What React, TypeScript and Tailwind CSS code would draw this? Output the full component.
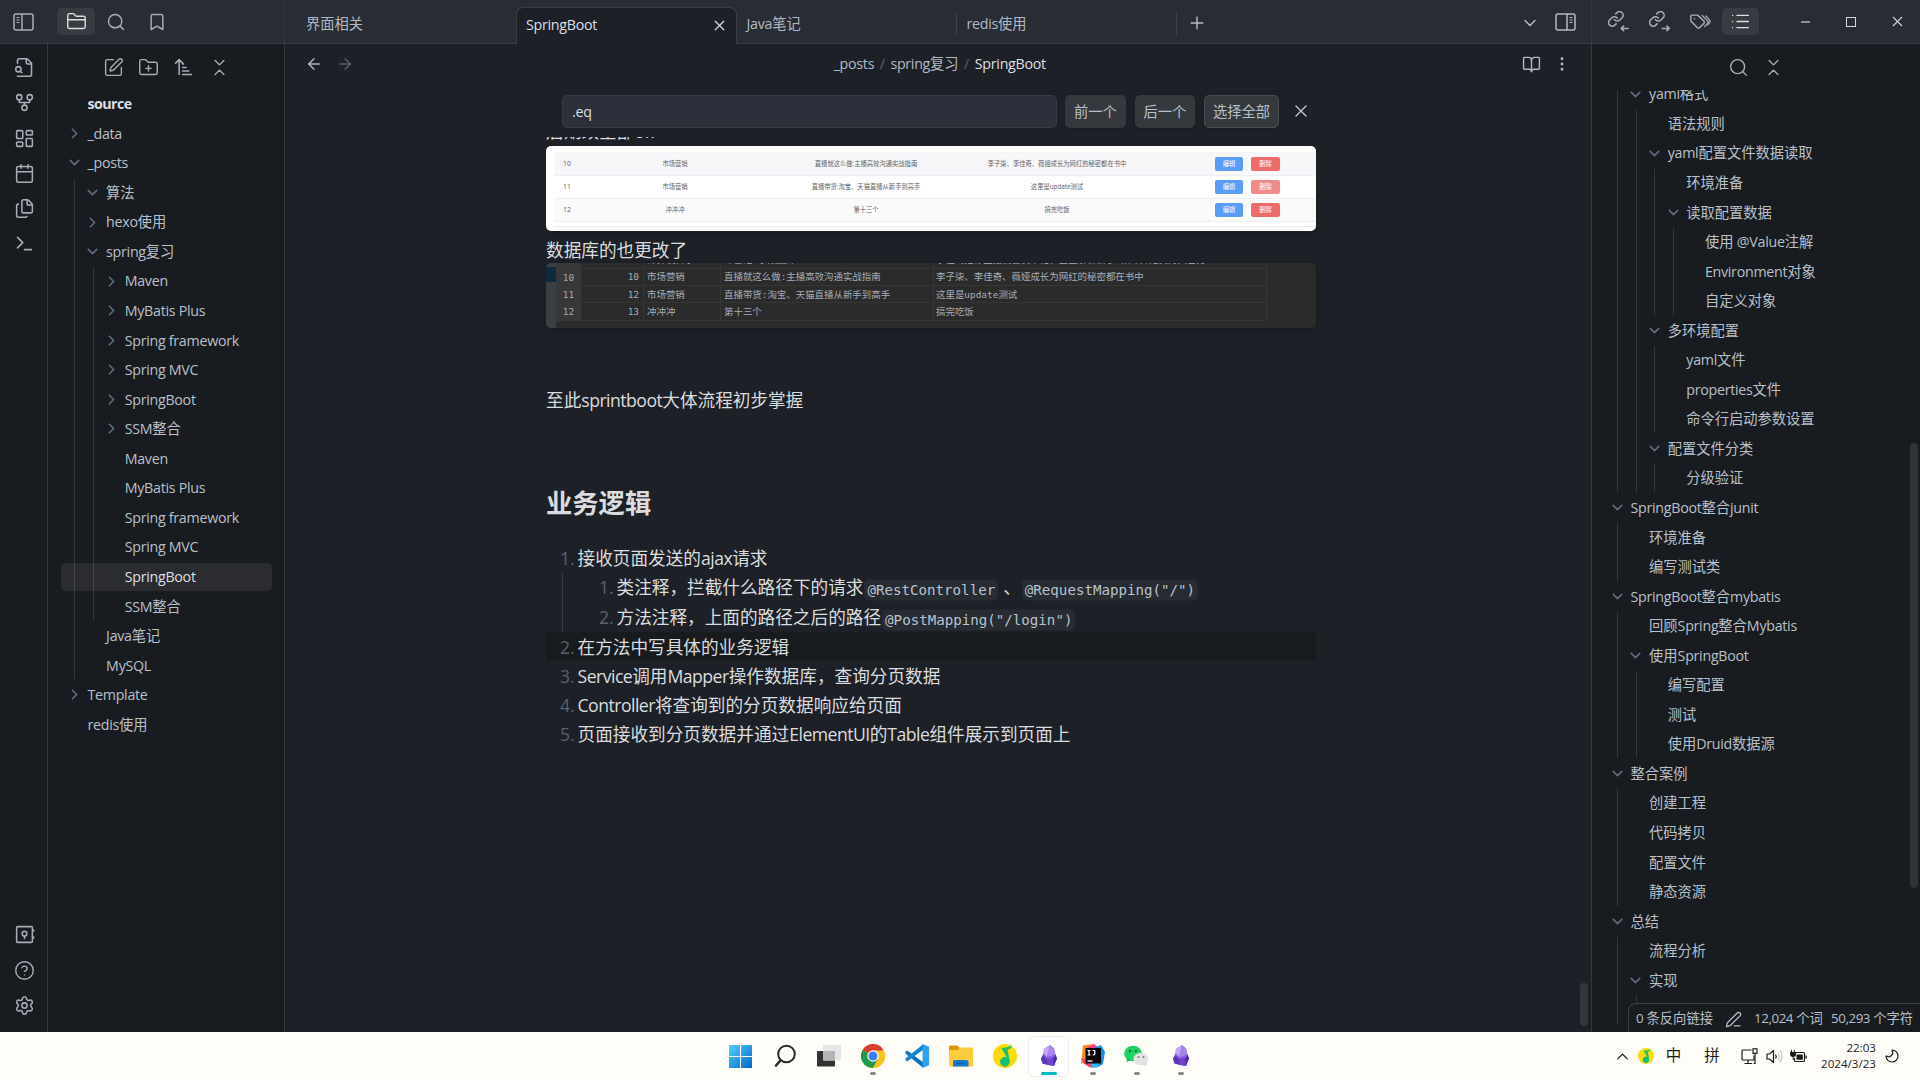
import type { ReactNode } from "react";
import {
  ArrowLeft, ArrowRight, BookOpen, Bookmark, Calendar, ChevronDown, ChevronRight, ChevronUp, ChevronsDownUp,
  CircleHelp, Files, FolderClosed, FolderPlus, GitFork, LayoutDashboard, List, EllipsisVertical, Moon, PenLine, Plus,
  Search, Settings, SquarePen, Terminal, X,
} from "lucide-react";

type TreeNode = { label?: string; children?: TreeNode[]; folded?: boolean; active?: boolean };

const FILES: TreeNode[] = [
  { label: "_data", folded: true },
  {
    label: "_posts",
    children: [
      { label: "算法", children: [] },
      { label: "hexo使用", folded: true },
      {
        label: "spring复习",
        children: [
          { label: "Maven", folded: true },
          { label: "MyBatis Plus", folded: true },
          { label: "Spring framework", folded: true },
          { label: "Spring MVC", folded: true },
          { label: "SpringBoot", folded: true },
          { label: "SSM整合", folded: true },
          { label: "Maven" },
          { label: "MyBatis Plus" },
          { label: "Spring framework" },
          { label: "Spring MVC" },
          { label: "SpringBoot", active: true },
          { label: "SSM整合" },
        ],
      },
      { label: "Java笔记" },
      { label: "MySQL" },
    ],
  },
  { label: "Template", folded: true },
  { label: "redis使用" },
];

const OUTLINE: TreeNode[] = [
  {
    children: [
      {
        label: "yaml格式",
        children: [
          { label: "语法规则" },
          {
            label: "yaml配置文件数据读取",
            children: [
              { label: "环境准备" },
              {
                label: "读取配置数据",
                children: [{ label: "使用 @Value注解" }, { label: "Environment对象" }, { label: "自定义对象" }],
              },
            ],
          },
          {
            label: "多环境配置",
            children: [{ label: "yaml文件" }, { label: "properties文件" }, { label: "命令行启动参数设置" }],
          },
          { label: "配置文件分类", children: [{ label: "分级验证" }] },
        ],
      },
    ],
  },
  { label: "SpringBoot整合junit", children: [{ label: "环境准备" }, { label: "编写测试类" }] },
  {
    label: "SpringBoot整合mybatis",
    children: [
      { label: "回顾Spring整合Mybatis" },
      { label: "使用SpringBoot", children: [{ label: "编写配置" }, { label: "测试" }, { label: "使用Druid数据源" }] },
    ],
  },
  {
    label: "整合案例",
    children: [{ label: "创建工程" }, { label: "代码拷贝" }, { label: "配置文件" }, { label: "静态资源" }],
  },
  { label: "总结", children: [{ label: "流程分析" }, { label: "实现", children: [{ label: "\u00a0" }] }] },
];

/** Mixed-script text: Latin runs are set slightly tighter than the CJK around them. */
function Mixed({ text, tight = false }: { text: string; tight?: boolean }) {
  return (
    <span className="whitespace-pre">
      {text.split(/([\x20-\x7e]+)/).map((run, i) =>
        i % 2 ? (
          <span key={i} className={tight ? "tracking-[-0.03em]" : "tracking-[-0.02em]"}>
            {run}
          </span>
        ) : (
          run
        ),
      )}
    </span>
  );
}

function Tree({ nodes, depth = 0 }: { nodes: TreeNode[]; depth?: number }) {
  return (
    <>
      {nodes.map((n, i) => (
        <div key={i}>
          {n.label && (
            <div className="relative mb-[1.56px] flex h-7 items-center">
              {n.active && (
                <div
                  className="absolute top-0 h-7 w-[211px] rounded-[5px] bg-[#ffffff14]"
                  style={{ left: -18.6 * depth }}
                />
              )}
              <span className="flex w-[26.5px] shrink-0 justify-center text-[#5b6b80]">
                {n.folded ? (
                  <ChevronRight size={17} strokeWidth={2.4} />
                ) : n.children ? (
                  <ChevronDown size={17} strokeWidth={2.4} />
                ) : null}
              </span>
              <span className={n.active ? "relative text-[#dcdfe4]" : ""}>
                <Mixed text={n.label} />
              </span>
            </div>
          )}
          {n.children && n.children.length > 0 && (
            <div className="ml-[13px] border-l border-[#34383c] pl-[4.6px]">
              <Tree nodes={n.children} depth={depth + 1} />
            </div>
          )}
        </div>
      ))}
    </>
  );
}

function Svg({ size = 21, children, w = 1.75 }: { size?: number; children: ReactNode; w?: number }) {
  return (
    <svg
      width={size} height={size} viewBox="0 0 24 24" fill="none" stroke="currentColor"
      strokeWidth={w} strokeLinecap="round" strokeLinejoin="round"
    >
      {children}
    </svg>
  );
}

function SidebarToggle({ right = false }: { right?: boolean }) {
  return (
    <svg
      width="21" height="18" viewBox="0 0 21 18" fill="none" stroke="currentColor" strokeWidth="1.5"
      className={right ? "-scale-x-100" : ""}
    >
      <rect x="1" y="1" width="19" height="16" rx="2" />
      <path d="M9 1v16" />
      <path d="M3.5 4.5h3M3.5 7h3M3.5 9.5h3" strokeWidth="1.2" />
    </svg>
  );
}

const ArrowSort = () => (
  <Svg>
    <path d="M7 20V3M3 7l4-4 4 4M11 12h4M11 16h7M11 20h10M11 8h1" />
  </Svg>
);

const QuickSwitch = () => (
  <Svg>
    <path d="M4 22h14a2 2 0 0 0 2-2V7l-5-5H6a2 2 0 0 0-2 2v3" />
    <path d="M14 2v4a2 2 0 0 0 2 2h4" />
    <circle cx="5" cy="14" r="3" />
    <path d="m9 18-1.8-1.8" />
  </Svg>
);

const Vault = () => (
  <Svg>
    <rect x="3" y="3" width="18" height="18" rx="1" />
    <circle cx="12" cy="11" r="2.7" />
    <path d="M12 14v2.5M22.5 7v1M22.5 15v1" />
  </Svg>
);

function LinkIcon({ out = false }: { out?: boolean }) {
  return (
    <Svg size={22} w={1.7}>
      <g transform="translate(-1 -1) scale(.8)" strokeWidth="2.1">
        <path d="M10 13a5 5 0 0 0 7.54.54l3-3a5 5 0 0 0-7.07-7.07l-1.72 1.71" />
        <path d="M14 11a5 5 0 0 0-7.54-.54l-3 3a5 5 0 0 0 7.07 7.07l1.71-1.71" />
      </g>
      {out ? <path d="M14.5 19H22M19.5 16.5 22 19l-2.5 2.5" /> : <path d="M22 19h-7.5M17 16.5 14.5 19l2.5 2.5" />}
    </Svg>
  );
}

const TagsIcon = () => (
  <Svg size={22} w={1.6}>
    <path d="M2 5.5v5.5l7.3 7.3a1.5 1.5 0 0 0 2.1 0l5-5a1.5 1.5 0 0 0 0-2.1L9.5 4.5H3a1 1 0 0 0-1 1z" />
    <path d="m14.5 5 6 6.2a1.5 1.5 0 0 1 0 2.1L17 17M18.5 5.5l4 4.7a2 2 0 0 1 0 2.5l-2 2.3" opacity=".9" />
    <path d="M6 8.5h.01" />
  </Svg>
);

function Cell({ w, children, cls = "" }: { w: number; children: ReactNode; cls?: string }) {
  return (
    <span className={"flex shrink-0 items-center justify-center " + cls} style={{ width: w }}>
      {children}
    </span>
  );
}

/* ---------- embedded pictures in the note ---------- */

const WEB_ROWS = [
  { id: "10", brand: "市场营销", name: "直播就这么做:主播高效沟通实战指南", desc: "李子柒、李佳奇、薇娅成长为网红的秘密都在书中", bg: "bg-[#f7f7f9]", del: "bg-[#ec6c6c]" },
  { id: "11", brand: "市场营销", name: "直播带货:淘宝、天猫直播从新手到高手", desc: "这里是update测试", bg: "bg-white", del: "bg-[#f08b8b]" },
  { id: "12", brand: "冲冲冲", name: "第十三个", desc: "搞完吃饭", bg: "bg-[#fafafa]", del: "bg-[#ec6c6c]" },
];

function WebTable() {
  return (
    <div className="flex h-[85px] flex-col overflow-hidden rounded-[5px] bg-white pl-2 text-[6.3px] text-[#606266] shadow-md">
      <div className="h-[7px] shrink-0 border-b border-[#f3f4f7]" />
      {WEB_ROWS.map((r) => (
        <div key={r.id} className={"flex h-[23px] shrink-0 items-center border-b border-[#ebeef5] " + r.bg}>
          <span className="w-[72px] pl-[9px] text-[7px]">{r.id}</span>
          <span className="w-[98px] text-center">{r.brand}</span>
          <span className="w-[284px] text-center">{r.name}</span>
          <span className="flex w-[98px] shrink-0 justify-center whitespace-nowrap">{r.desc}</span>
          <span className="ml-[109px] flex gap-[8px] text-white">
            <span className="flex h-[14px] w-[28px] items-center justify-center rounded-[2px] bg-[#5a9cf8]">编辑</span>
            <span className={"flex h-[14px] w-[29px] items-center justify-center rounded-[2px] " + r.del}>删除</span>
          </span>
        </div>
      ))}
      <div className="mt-1 h-px bg-[#ececee]" />
    </div>
  );
}

const DB_ROWS = [
  { n: "9", id: "9", brand: "计算机科学", name: "零基础   学数据库", desc: "李佳琦推荐直播销售员书籍，全面解析新手 从零开始到月入百万" },
  { n: "10", id: "10", brand: "市场营销", name: "直播就这么做:主播高效沟通实战指南", desc: "李子柒、李佳奇、薇娅成长为网红的秘密都在书中" },
  { n: "11", id: "12", brand: "市场营销", name: "直播带货:淘宝、天猫直播从新手到高手", desc: "这里是update测试" },
  { n: "12", id: "13", brand: "冲冲冲", name: "第十三个", desc: "搞完吃饭" },
];

function DbTable() {
  return (
    <div className="flex h-[65px] overflow-hidden rounded-[5px] bg-[#2b2b2b] font-['DejaVu_Sans_Mono','Noto_Sans_CJK_SC',monospace] text-[9.45px] leading-none text-[#a3aebb] shadow-md">
      <div className="w-[10px] shrink-0 bg-[#3c3f41] pt-1">
        <div className="h-[15px] bg-[#0d293e]" />
      </div>
      <div className="-mt-[11.5px]">
        {DB_ROWS.map((r) => (
          <div key={r.n} className="flex h-[17.3px] items-center whitespace-nowrap">
            <span className="flex h-full w-[25px] items-center justify-center bg-[#36383a] text-[#a4a8ab]">{r.n}</span>
            <span className="flex h-full w-[63px] items-center justify-end border-r border-b border-[#363636] pr-[4px]">{r.id}</span>
            <span className="flex h-full w-[77px] items-center border-r border-b border-[#363636] pl-[3px]">{r.brand}</span>
            <span className="flex h-full w-[213px] items-center border-r border-b border-[#363636] pl-[3px]">{r.name}</span>
            <span className="flex h-full w-[333px] items-center border-r border-b border-[#363636] pl-[2px]">{r.desc}</span>
          </div>
        ))}
      </div>
    </div>
  );
}

/* ---------- note body ---------- */

function Code({ children }: { children: string }) {
  return (
    <code className="ml-px inline-flex h-[21px] translate-y-[2.5px] items-center rounded-[5px] bg-[#272b32] px-[3px] font-['DejaVu_Sans_Mono',monospace] text-[14.15px] text-[#b9c2cd]">
      {children}
    </code>
  );
}

function Item({
  n, text, children, active = false, tall = false,
}: { n: number; text: string; children?: ReactNode; active?: boolean; tall?: boolean }) {
  return (
    <div
      className={
        "flex items-center whitespace-nowrap " + (active ? "bg-[#181b1e] " : "") + (tall ? "h-[29.8px]" : "h-[29.2px]")
      }
    >
      <span className="w-[31.5px] pl-[14px] text-[#566270]">{n}.</span>
      <Mixed text={text} tight />
      {children}
    </div>
  );
}

function Note() {
  return (
    <div className="flex h-[895px] flex-col overflow-hidden pl-[261px] text-[17.65px] text-[#dadcdf]">
      <div className="w-[770px]">
        <div className="-mt-[20px] h-[29px] leading-[29px]">后期改全部ok</div>
        <WebTable />
        <div className="h-[32px] pt-[5px] leading-[29px]">数据库的也更改了</div>
        <DbTable />
        <div className="mt-[58px] h-[29px] leading-[29px]"><Mixed text="至此sprintboot大体流程初步掌握" tight /></div>
        <div className="mt-[70px] h-[36px] text-[26.3px] leading-[36px] font-bold">业务逻辑</div>
        <div className="mt-[22.5px]">
          <Item n={1} text="接收页面发送的ajax请求" />
          <div className="ml-[16px] border-l border-[#363a3e] pl-[22px]">
            <Item n={1} tall text="类注释，拦截什么路径下的请求">
              <Code>@RestController</Code>
              <span className="ml-[5px]">、</span>
              <Code>@RequestMapping("/")</Code>
            </Item>
            <Item n={2} tall text="方法注释，上面的路径之后的路径">
              <Code>@PostMapping("/login")</Code>
            </Item>
          </div>
          <Item n={2} active text="在方法中写具体的业务逻辑" />
          <Item n={3} text="Service调用Mapper操作数据库，查询分页数据" />
          <Item n={4} text="Controller将查询到的分页数据响应给页面" />
          <Item n={5} text="页面接收到分页数据并通过ElementUI的Table组件展示到页面上" />
        </div>
      </div>
    </div>
  );
}

/* ---------- taskbar artwork ---------- */

const WinLogo = () => (
  <svg width="23" height="23" viewBox="0 0 23 23">
    <defs>
      <linearGradient id="win" x1="0" y1="0" x2="1" y2="1">
        <stop offset="0" stopColor="#55d0fb" /><stop offset="1" stopColor="#0067c9" />
      </linearGradient>
    </defs>
    <path fill="url(#win)" d="M0 0h11v11H0zM12 0h11v11H12zM0 12h11v11H0zM12 12h11v11H12z" />
  </svg>
);

const TaskSearch = () => (
  <svg width="24" height="24" viewBox="0 0 24 24" fill="none" stroke="#2a2a2a" strokeLinecap="round">
    <circle cx="13.5" cy="10" r="8.3" strokeWidth="2" />
    <path d="m7.5 16.5-4.5 5" strokeWidth="2.6" />
  </svg>
);

const TaskView = () => (
  <svg width="24" height="24" viewBox="0 0 24 24">
    <rect x="0" y="7" width="18" height="15.5" rx="1" fill="#333" />
    <rect x="6" y="1" width="18" height="15.5" rx="1" fill="#e6e6e6" />
    <rect x="6" y="7" width="12" height="9.5" fill="#b5b5b5" />
  </svg>
);

const Chrome = () => (
  <svg width="24" height="24" viewBox="0 0 48 48">
    <circle cx="24" cy="24" r="24" fill="#fbbc1e" />
    <path d="M24 24 3.2 12A24 24 0 0 1 44.8 12z" fill="#dc3a2e" />
    <path d="M24 24 3.2 12A24 24 0 0 0 24 48l10.4-18z" fill="#1f9a4b" />
    <path d="M24 13h21.3A24 24 0 0 1 24 48l10-18z" fill="#fbc116" />
    <circle cx="24" cy="24" r="11.5" fill="#fff" />
    <circle cx="24" cy="24" r="9" fill="#3a7df0" />
  </svg>
);

const VsCode = () => (
  <svg width="24" height="24" viewBox="0 0 24 24">
    <path d="M.4 8 2 6.5 18.5 18.5V24L.4 9.5z" fill="#0b72ba" />
    <path d="M.4 16 2 17.5 18.5 5.5V0L.4 14.5z" fill="#0e86d4" />
    <path d="M17.5 0 24 2.8v18.4L17.5 24z" fill="#2ba2f2" />
  </svg>
);

const Explorer = () => (
  <svg width="24" height="24" viewBox="0 0 24 24">
    <path d="M0 3a1.5 1.5 0 0 1 1.5-1.5h7L11 4v4H0z" fill="#d99a0a" />
    <path d="M0 6h9l2-2.5h12a1 1 0 0 1 1 1V21a1.5 1.5 0 0 1-1.5 1.5h-21A1.5 1.5 0 0 1 0 21z" fill="#fdcb3e" />
    <path d="M4 22.5V18a2 2 0 0 1 2-2h11.5a2 2 0 0 1 2 2v4.5z" fill="#1677cc" />
    <path d="M7.5 19.5h8.5" stroke="#0c5aa3" strokeWidth="1.2" />
  </svg>
);

const QQMusic = ({ size = 24 }: { size?: number }) => (
  <svg width={size} height={size} viewBox="0 0 24 24">
    <circle cx="12" cy="12" r="12" fill="#fddc05" />
    <path d="M8 3.5c4 .8 7.5-.2 10.8-2.5-.4 2.6-1.5 4.2-4.3 4.7l2.3 11.3a4.9 4.9 0 1 1-3-3.8z" fill="#16bf78" />
  </svg>
);

const Obsidian = () => (
  <svg width="24" height="24" viewBox="0 0 24 24">
    <path d="m13 1 4 3.5 1.5 6 1.500 4-3 7.500-5.500-1-6-1.500L4 14.500l2.500-5.500.5-4z" fill="#8a5fe0" />
    <path d="M13 1 7 4.500 6.500 9 10 13z" fill="#c4a9f5" />
    <path d="m13 1 4 3.500 1.500 6L10 13z" fill="#a684ee" />
    <path d="m4 14.500 2.500-3L10 15l1 6-5.500-1.500z" fill="#5b36b5" />
    <path d="m10 15 7-1.500 1 3-1 5.500-6-1z" fill="#7044cf" />
    <path d="m18.500 10.500 1.500 4-3 7.500-1-7z" fill="#4f2ba8" />
  </svg>
);

const Idea = () => (
  <svg width="24" height="24" viewBox="0 0 24 24">
    <path d="M2 1.5 12 0l-2 12L0 20l1-9z" fill="#fb8a2b" />
    <path d="m7 3 6-3 5 4-3 7H5z" fill="#f0418b" />
    <path d="m15 3 5-2 4 7-2 12-5 3-4-6z" fill="#1a8df3" />
    <path d="m0 14 8 3 5 7-5-1-6-4z" fill="#fb3f6f" />
    <path d="m10 18 8 1-2 5-5-1z" fill="#1ec0f5" />
    <rect x="4.5" y="4" width="15.5" height="15.5" fill="#0a0506" />
    <path d="M6.500 6.500h3M8 6.500V11M6.500 11h3M11.500 6.500h2.300v3.300q0 1.300-2 1.200" stroke="#fff" strokeWidth="1.2" fill="none" />
    <path d="M6.500 17h5" stroke="#ddd" strokeWidth="1.5" />
  </svg>
);

const WeChat = () => (
  <svg width="25" height="24" viewBox="0 0 25 24">
    <ellipse cx="9" cy="9.5" rx="9" ry="7.7" fill="#1fd367" />
    <path d="m3 14-.5 4L7 16z" fill="#12b957" />
    <circle cx="6" cy="7" r="1.2" fill="#0c6b35" /><circle cx="12" cy="7" r="1.2" fill="#0c6b35" />
    <ellipse cx="17" cy="15" rx="7.5" ry="6.3" fill="#e4e4e4" />
    <path d="m20 20 2.500 2.500V18z" fill="#d4d4d4" />
    <circle cx="14.5" cy="13" r="1" fill="#777" /><circle cx="19.5" cy="13" r="1" fill="#777" />
  </svg>
);

const APPS: { icon: ReactNode; mark?: "run" | "on" }[] = [
  { icon: <WinLogo /> }, { icon: <TaskSearch /> }, { icon: <TaskView /> }, { icon: <Chrome />, mark: "run" },
  { icon: <VsCode /> }, { icon: <Explorer /> }, { icon: <QQMusic /> }, { icon: <Obsidian />, mark: "on" },
  { icon: <Idea />, mark: "run" }, { icon: <WeChat />, mark: "run" }, { icon: <Obsidian />, mark: "run" },
];

function Taskbar() {
  return (
    <div className="flex h-12 bg-[#fffdf8] text-[#1b1b1b]">
      <div className="ml-[718.5px] flex pt-[5px]">
        {APPS.map((a, i) => (
          <div key={i} className="flex w-[44px] justify-center">
            <div
              className={
                "relative flex h-[39px] w-[39px] items-center justify-center rounded-[5px] pb-px " +
                (a.mark === "on" ? "bg-white ring-1 ring-[#ececea]" : "")
              }
            >
              {a.icon}
              {a.mark === "run" && <i className="absolute bottom-px h-[3px] w-[6px] rounded-full bg-[#8b8b88]" />}
              {a.mark === "on" && <i className="absolute bottom-px h-[3px] w-[16px] rounded-full bg-[#00b7c3]" />}
            </div>
          </div>
        ))}
      </div>
      <div className="ml-auto flex items-center pr-[18px]">
        <Cell w={22}><ChevronUp size={19} strokeWidth={1.7} /></Cell>
        <Cell w={26}><QQMusic size={16} /></Cell>
        <Cell w={29} cls="text-[15.5px]">中</Cell>
        <Cell w={48} cls="text-[15.5px]">拼</Cell>
        <Cell w={26} cls="pl-px">
          <svg width="17" height="17" viewBox="0 0 17 17" fill="none" stroke="currentColor" strokeWidth="1.2">
            <path d="M10.5 2H2a1 1 0 0 0-1 1v8a1 1 0 0 0 1 1h11V7.5M7 12v3M3.5 15.5h7.5" />
            <rect x="12" y=".8" width="4" height="4.5" /><path d="M14 5.3V15.5h-1.5" />
          </svg>
        </Cell>
        <Cell w={24}>
          <svg width="17" height="15" viewBox="0 0 17 15" fill="none" stroke="currentColor" strokeWidth="1.2">
            <path d="M1 5h2.5L7.500 1.500v12L3.500 10H1z" strokeLinejoin="round" />
            <path d="M9.500 5.500q1.500 2 0 4" /><path d="M11.800 3.500q3 4 0 8M14 1.500q4 6 0 12" stroke="#c4c4c0" />
          </svg>
        </Cell>
        <Cell w={24}>
          <svg width="17" height="13" viewBox="0 0 17 13">
            <path d="M6 2.500h7.500a1 1 0 0 1 1 1v7a1 1 0 0 1-1 1h-8a1 1 0 0 1-1-1V8" fill="none" stroke="currentColor" strokeWidth="1.2" />
            <path d="M6.500 4.500h6.300v5.300H6.500zM15.500 5.500h1.300v3h-1.300zM0 2h1V0h1v2h1.800V0h1v2H6v2.500q0 2-2.300 2.500v3h-1V7Q0 6.500 0 4.500z" fill="currentColor" />
          </svg>
        </Cell>
        <div className="w-[66px] text-right text-[11.6px] leading-4">
          <div>22:03</div>
          <div>2024/3/23</div>
        </div>
        <Cell w={26} cls="pl-1.5"><Moon size={16} strokeWidth={1.8} className="-scale-x-100" /></Cell>
      </div>
    </div>
  );
}

/* ---------- application ---------- */

export default function App() {
  return (
    <div className="flex h-[1080px] w-[1920px] flex-col overflow-hidden bg-[#1d2127] font-['Open_Sans','Noto_Sans_CJK_SC',sans-serif] text-[14.25px] text-[#b8c0ca]">
      <div className="flex h-[1032px]">
        {/* left dock */}
        <div className="flex w-[285px] shrink-0 flex-col border-r border-[#34383d] bg-[#181b1f]">
          <div className="flex h-11 shrink-0 items-center border-b border-[#3a3e44] bg-[#282c34] text-[#a9adb6]">
            <Cell w={47}><SidebarToggle /></Cell>
            <div className="ml-[10px] flex h-[27px] w-[38px] items-center justify-center rounded-[5px] bg-[#383c42] text-[#dcdcdc]">
              <FolderClosed size={21} strokeWidth={1.6} />
            </div>
            <Cell w={42}><Search size={20} strokeWidth={1.75} /></Cell>
            <Cell w={40}><Bookmark size={20} strokeWidth={1.75} /></Cell>
          </div>
          <div className="flex min-h-0 flex-1">
            <div className="flex w-12 shrink-0 flex-col items-center border-r border-[#34383d] pt-[13px] pl-px text-[#a9adb6]">
              <div className="flex flex-col gap-[14.3px]">
                <QuickSwitch />
                <GitFork size={21} strokeWidth={1.75} />
                <LayoutDashboard size={21} strokeWidth={1.75} />
                <Calendar size={21} strokeWidth={1.75} />
                <Files size={21} strokeWidth={1.75} />
                <Terminal size={21} strokeWidth={1.75} />
              </div>
              <div className="mt-auto mb-[16px] flex flex-col gap-[14.3px]">
                <Vault />
                <CircleHelp size={21} strokeWidth={1.6} />
                <Settings size={21} strokeWidth={1.75} />
              </div>
            </div>
            <div className="min-w-0 flex-1">
              <div className="mt-[12.5px] flex h-[21px] items-center gap-[14.2px] pl-[55px] text-[#a9adb6]">
                <SquarePen size={21} strokeWidth={1.6} />
                <FolderPlus size={21} strokeWidth={1.6} />
                <ArrowSort />
                <ChevronsDownUp size={21} strokeWidth={1.6} />
              </div>
              <div className="mt-[12.4px] pl-[13px]">
                <div className="mb-[1.56px] flex h-7 items-center pl-[26.5px] font-bold tracking-[-0.04em] text-[#dcdfe4]">source</div>
                <Tree nodes={FILES} />
              </div>
            </div>
          </div>
        </div>

        {/* editor */}
        <div className="relative flex w-[1307px] shrink-0 flex-col border-r border-[#34383d]">
          <div className="flex h-11 shrink-0 items-end text-[#b3b9c3]">
            <div className="flex h-full w-[231px] items-center border-b border-[#3a3e44] bg-[#282c34] pt-[5px] pl-[21px]">界面相关</div>
            <div className="flex h-full w-[221px] items-end bg-[#282c34]">
              <div className="flex h-[37px] w-full items-center rounded-t-[7px] border border-b-0 border-[#3a3e44] bg-[#1d2127] pr-[8px] pb-[2px] pl-[9px] text-[#dcdfe4]">
                <Mixed text="SpringBoot" />
                <X size={17} strokeWidth={1.7} className="ml-auto" />
              </div>
            </div>
            <div className="flex h-full flex-1 items-center border-b border-[#3a3e44] bg-[#282c34] pt-[5px]">
              <div className="flex h-[22px] w-[220px] items-center border-r border-[#3d4148] pl-[9.5px]"><Mixed text="Java笔记" /></div>
              <div className="flex h-[22px] w-[220px] items-center border-r border-[#3d4148] pl-[9.5px]"><Mixed text="redis使用" /></div>
              <Plus size={20} strokeWidth={1.75} className="mb-[3px] ml-[10px]" />
              <ChevronDown size={20} strokeWidth={1.75} className="mr-[15px] mb-[3px] ml-auto" />
              <span className="mb-[4px]"><SidebarToggle right /></span>
              <span className="w-[15px]" />
            </div>
          </div>
          <div className="flex h-[40px] shrink-0 items-center text-[#b3b9c3]">
            <ArrowLeft size={18} strokeWidth={1.8} className="ml-[19.5px]" />
            <ArrowRight size={18} strokeWidth={1.8} className="ml-[13px] text-[#5a5f66]" />
            <div className="flex flex-1 justify-center gap-[5.5px] pl-[4px]">
              <Mixed text="_posts" />
              <span className="text-[#566270]">/</span>
              <Mixed text="spring复习" />
              <span className="text-[#566270]">/</span>
              <span className="text-[#dcdfe4]"><Mixed text="SpringBoot" /></span>
            </div>
            <BookOpen size={19} strokeWidth={1.75} className="mr-[12px]" />
            <EllipsisVertical size={18} strokeWidth={1.75} className="mr-[20px]" />
          </div>
          <div className="flex h-[53px] shrink-0 items-center pt-[2px] pl-[277px]">
            <div className="flex h-[33px] w-[495px] items-center rounded-[5px] border border-[#363a41] bg-[#2c303a] pl-[9px] text-[#dcdfe4]">
              <Mixed text=".eq" />
            </div>
            <div className="ml-[8px] flex h-[33px] w-[61px] items-center justify-center rounded-[5px] bg-[#35393d] shadow-sm">前一个</div>
            <div className="ml-[9px] flex h-[33px] w-[60px] items-center justify-center rounded-[5px] bg-[#35393d] shadow-sm">后一个</div>
            <div className="ml-[9px] flex h-[33px] w-[75px] items-center justify-center rounded-[5px] border border-[#484c50] bg-[#35393d] shadow-sm">选择全部</div>
            <X size={20} strokeWidth={1.75} className="mb-px ml-[11.5px]" />
          </div>
          <Note />
          <div className="absolute top-[983px] right-[3px] h-[43px] w-[8px] rounded-full bg-[#33373b]" />
        </div>

        {/* outline dock */}
        <div className="relative flex flex-1 flex-col overflow-hidden bg-[#181b1f]">
          <div className="flex h-11 shrink-0 items-center border-b border-[#3a3e44] bg-[#282c34] pl-[6px] text-[#a9adb6]">
            <Cell w={41}><LinkIcon /></Cell>
            <Cell w={41}><LinkIcon out /></Cell>
            <Cell w={40}><TagsIcon /></Cell>
            <div className="ml-[2px] flex h-[27px] w-[37px] items-center justify-center rounded-[5px] bg-[#383c42] text-[#dcdcdc]">
              <List size={21} strokeWidth={1.6} />
            </div>
            <div className="ml-auto flex w-[138px] shrink-0 items-center">
              <Cell w={46}><i className="h-[2px] w-[9px] bg-[#8d9095]" /></Cell>
              <Cell w={46}><i className="size-[10px] border border-[#d5d7da]" /></Cell>
              <Cell w={46}><X size={17} strokeWidth={1.5} className="text-[#d5d7da]" /></Cell>
            </div>
          </div>
          <div className="flex h-[46px] shrink-0 items-center gap-[14px] pl-[136px] text-[#a9adb6]">
            <Search size={21} strokeWidth={1.6} />
            <ChevronsDownUp size={21} strokeWidth={1.6} />
          </div>
          <div className="min-h-0 flex-1 overflow-hidden">
            <div className="-mt-[10px] pl-[12px]">
              <Tree nodes={OUTLINE} />
            </div>
          </div>
          <div className="absolute top-[443px] right-[2px] h-[445px] w-[8px] rounded-full bg-[#303439]" />
          <div className="absolute right-0 bottom-0 flex h-[29px] w-[292px] items-center rounded-tl-[8px] border-t border-l border-[#3a3e44] bg-[#181b1f] pt-[2px] pl-[7px] text-[13.3px] whitespace-nowrap">
            <span className="w-[89px] shrink-0"><Mixed text="0 条反向链接" /></span>
            <PenLine size={17} strokeWidth={1.75} className="shrink-0" />
            <span className="ml-[12px] w-[77px] shrink-0"><Mixed text="12,024 个词" tight /></span>
            <Mixed text="50,293 个字符" tight />
          </div>
        </div>
      </div>
      <Taskbar />
    </div>
  );
}
